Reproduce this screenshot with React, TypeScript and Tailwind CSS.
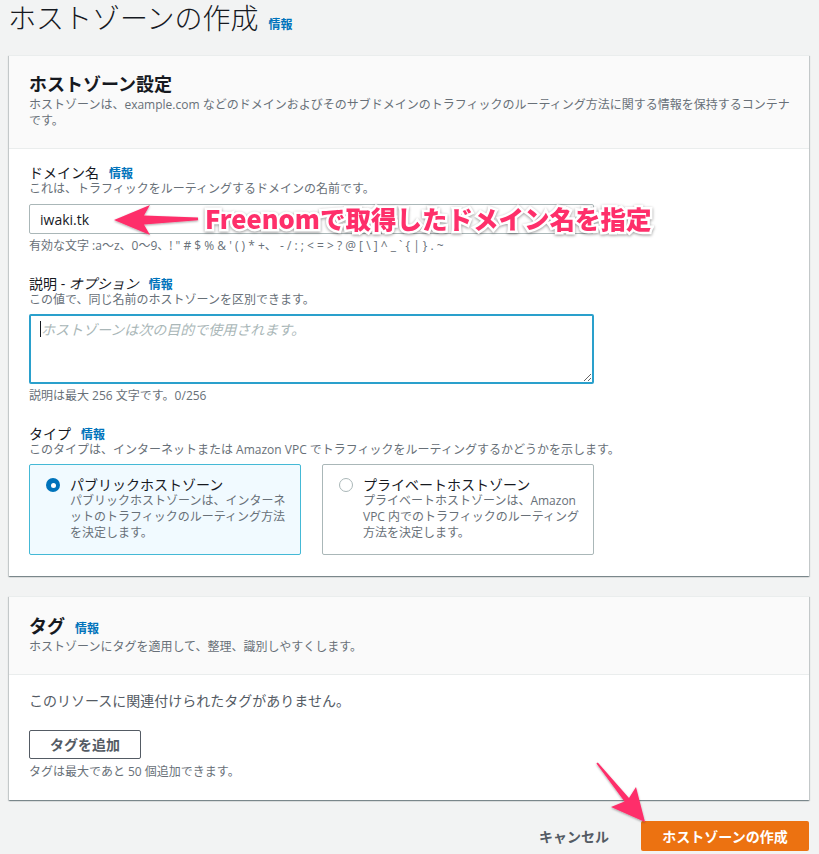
import React from "react";

const font = "font-['Open_Sans','Noto_Sans_CJK_JP',sans-serif]";

function Info() {
  return <span className="text-[12px] font-bold text-[#0073bb] ml-[10px]">情報</span>;
}

function Radio({ checked }: { checked: boolean }) {
  if (checked) {
    return (
      <span className="mt-[1px] flex h-[14px] w-[14px] shrink-0 items-center justify-center rounded-full bg-[#0073bb]">
        <span className="h-[5px] w-[5px] rounded-full bg-white" />
      </span>
    );
  }
  return <span className="mt-[1px] h-[14px] w-[14px] shrink-0 rounded-full border border-[#aab7b8] bg-white" />;
}

const panel =
  "bg-white border-t border-[#eaeded] shadow-[0_1px_1px_0_rgba(0,28,36,0.3),1px_1px_1px_0_rgba(0,28,36,0.15),-1px_1px_1px_0_rgba(0,28,36,0.15)]";

const desc = "h-[16px] text-[12px] leading-[16px] text-[#687078] whitespace-nowrap";
const label = "flex h-[16px] items-baseline text-[14px] leading-[16px]";

export default function App() {
  return (
    <div className={`relative h-[854px] overflow-hidden bg-[#f2f3f3] pl-[9px] pr-[10px] text-[#16191f] ${font}`}>
      {/* page title */}
      <div className="-ml-px flex h-[55px] items-baseline">
        <h1 className="text-[28px] leading-[36px] font-light">ホストゾーンの作成</h1>
        <Info />
      </div>

      {/* host zone settings */}
      <section className={panel}>
        <div className="border-b border-[#eaeded] bg-[#fafafa] px-[20px] pt-[17px] pb-[19px]">
          <h2 className="h-[22px] text-[18px] leading-[22px] font-bold">ホストゾーン設定</h2>
          <p className="mt-[2px] h-[32px] whitespace-nowrap text-[12px] leading-[16px] text-[#687078]">
            ホストゾーンは、example.com などのドメインおよびそのサブドメインのトラフィックのルーティング方法に関する情報を保持するコンテナ
            <br />
            です。
          </p>
        </div>
        <div className="px-[20px] pt-[16px] pb-[21px]">
          <div className={label}>
            <span>ドメイン名</span>
            <Info />
          </div>
          <p className={desc}>これは、トラフィックをルーティングするドメインの名前です。</p>
          <div className="mt-[7px] flex h-[30px] w-[565px] items-center rounded-[2px] border border-[#aab7b8] pl-[10px] text-[14px]">
            iwaki.tk
          </div>
          <p className={`mt-[4px] ${desc}`}>
            {"有効な文字 :a〜z、0〜9、! \" # $ % & ' ( ) * +、 - / : ; < = > ? @ [ \\ ] ^ _ ` { | } . ~"}
          </p>

          <div className={`mt-[22px] ${label}`}>
            <span>
              説明 - <i>オプション</i>
            </span>
            <Info />
          </div>
          <p className={desc}>この値で、同じ名前のホストゾーンを区別できます。</p>
          <div className="relative mt-[6px] w-[565px]">
            <textarea
              readOnly
              placeholder="ホストゾーンは次の目的で使用されます。"
              className="block h-[70px] w-full resize-y rounded-[2px] border-2 border-[#2aa0cc] bg-white px-[10px] py-[4px] text-[14px] leading-[20px] outline-none placeholder:italic placeholder:text-[#aab7b8]"
            />
            <span className="absolute left-[11px] top-[7px] h-[16px] w-px bg-[#16191f]" />
          </div>
          <p className={`mt-[4px] ${desc}`}>説明は最大 256 文字です。0/256</p>

          <div className={`mt-[22px] ${label}`}>
            <span>タイプ</span>
            <Info />
          </div>
          <p className={desc}>
            このタイプは、インターネットまたは Amazon VPC でトラフィックをルーティングするかどうかを示します。
          </p>
          <div className="mt-[6px] flex gap-[21px]">
            <div className="flex h-[91px] w-[272px] gap-[10px] rounded-[2px] border border-[#44b9d6] bg-[#f1faff] pt-[12px] pl-[16px]">
              <Radio checked />
              <div>
                <div className="h-[16px] text-[14px] leading-[16px]">パブリックホストゾーン</div>
                <p className="h-[48px] whitespace-nowrap text-[12px] leading-[16px] text-[#687078]">
                  パブリックホストゾーンは、インターネ
                  <br />
                  ットのトラフィックのルーティング方法
                  <br />
                  を決定します。
                </p>
              </div>
            </div>
            <div className="flex h-[91px] w-[272px] gap-[10px] rounded-[2px] border border-[#aab7b8] bg-white pt-[12px] pl-[16px]">
              <Radio checked={false} />
              <div>
                <div className="h-[16px] text-[14px] leading-[16px]">プライベートホストゾーン</div>
                <p className="h-[48px] whitespace-nowrap text-[12px] leading-[16px] text-[#687078]">
                  プライベートホストゾーンは、Amazon
                  <br />
                  VPC 内でのトラフィックのルーティング
                  <br />
                  方法を決定します。
                </p>
              </div>
            </div>
          </div>
        </div>
      </section>

      {/* tags */}
      <section className={`${panel} mt-[20px]`}>
        <div className="border-b border-[#eaeded] bg-[#fafafa] px-[20px] pt-[18px] pb-[19px]">
          <div className="flex h-[22px] items-baseline">
            <h2 className="text-[18px] leading-[22px] font-bold">タグ</h2>
            <Info />
          </div>
          <p className={`mt-[2px] ${desc}`}>ホストゾーンにタグを適用して、整理、識別しやすくします。</p>
        </div>
        <div className="px-[20px] pt-[16px] pb-[20px]">
          <p className="h-[20px] text-[14px] leading-[20px] text-[#545b64]">このリソースに関連付けられたタグがありません。</p>
          <button className="mt-[19px] block h-[29px] w-[112px] rounded-[2px] border border-[#545b64] bg-white text-[14px] font-bold text-[#545b64]">
            タグを追加
          </button>
          <p className={`mt-[5px] ${desc}`}>タグは最大であと 50 個追加できます。</p>
        </div>
      </section>

      {/* footer actions */}
      <div className="mt-[21px] flex justify-end gap-[12px]">
        <button className="h-[30px] px-[20px] text-[14px] font-bold text-[#545b64]">キャンセル</button>
        <button className="h-[30px] w-[168px] rounded-[2px] bg-[#ec7211] text-[14px] font-bold text-white">
          ホストゾーンの作成
        </button>
      </div>

      {/* annotations */}
      <svg className="pointer-events-none absolute left-0 top-0" width="819" height="854">
        <defs>
          <filter id="sh" x="-20%" y="-20%" width="140%" height="140%">
            <feDropShadow dx="0" dy="1" stdDeviation="1.2" floodColor="#000" floodOpacity="0.35" />
          </filter>
        </defs>
        <polygon
          filter="url(#sh)"
          fill="#fe2f6a"
          points="114,220 150,205 144,215.5 198,217.6 198,220.2 144,224.5 150,235"
        />
        <polygon
          filter="url(#sh)"
          fill="#fe2f6a"
          points="645,822 611,807 624.5,801.5 596.4,763.5 597.8,762.5 629,798 636,787"
        />
      </svg>
      <div className="pointer-events-none absolute left-[205px] top-[201px] whitespace-nowrap text-[25.5px] leading-[34px] font-black text-[#fe2f6a] [-webkit-text-stroke:5px_white] [paint-order:stroke_fill] drop-shadow-[0_1px_1.5px_rgba(0,0,0,0.4)] font-['Noto_Sans_CJK_JP',sans-serif]">
        Freenomで取得したドメイン名を指定
      </div>
    </div>
  );
}
